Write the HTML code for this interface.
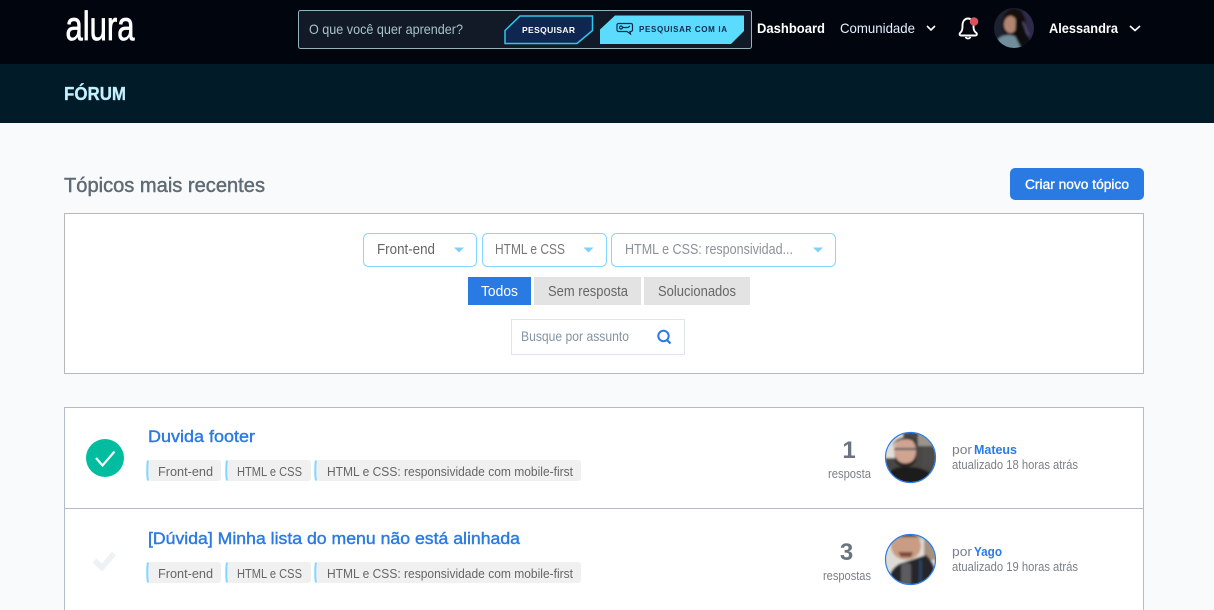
<!DOCTYPE html>
<html lang="pt-BR">
<head>
<meta charset="utf-8">
<title>Fórum</title>
<style>
html,body{margin:0;padding:0;width:1214px;height:610px;overflow:hidden;background:#f9fafc}
svg{display:block;position:absolute;left:0;top:0}
text{font-family:"Liberation Sans",sans-serif;}
.tag{font-size:12.800px;fill:#666}
.b{font-weight:bold}
.sel{font-size:14.500px}
.tab{font-size:14.500px;fill:#666}
.sm{font-size:12.500px;fill:#7a8088}
</style>
</head>
<body>
<svg width="1214" height="610" viewBox="0 0 1214 610" xmlns="http://www.w3.org/2000/svg">
<defs>
<clipPath id="c0"><circle cx="1014" cy="28" r="20"/></clipPath>
<clipPath id="c1"><circle cx="910.500" cy="457.500" r="24.500"/></clipPath>
<clipPath id="c2"><circle cx="910.500" cy="559.500" r="24.500"/></clipPath>
<filter id="bl" x="-10%" y="-10%" width="120%" height="120%"><feGaussianBlur stdDeviation="1.100"/></filter>
</defs>

<!-- header -->
<rect x="0" y="0" width="1214" height="64" fill="#01050e"/>
<rect x="0" y="64" width="1214" height="59" fill="#021b29"/>
<text x="65.500" y="40" font-size="41" fill="#fff" stroke="#fff" stroke-width="0.700" textLength="69" lengthAdjust="spacingAndGlyphs">alura</text>
<text x="64" y="100" font-size="18.500" class="b" fill="#c4f1ff" stroke="#c4f1ff" stroke-width="0.300" textLength="62" lengthAdjust="spacingAndGlyphs">FÓRUM</text>

<!-- search -->
<rect x="298.500" y="10.500" width="453" height="38" rx="2" fill="#111a26" stroke="#94b4bb"/>
<text x="309" y="34" font-size="14" fill="#a9c3ca" textLength="154" lengthAdjust="spacingAndGlyphs">O que você quer aprender?</text>
<path d="M505 30.500 L520 16 H592.500 V30.500 L577 43.500 H505 Z" fill="#0f2750" stroke="#2fc6ec" stroke-width="1.500"/>
<text x="522" y="33" font-size="8.500" class="b" fill="#fff" textLength="53" lengthAdjust="spacing">PESQUISAR</text>
<path d="M600 29.500 L615 15.500 H744 V31 L731 44 H600 Z" fill="#5bdcff"/>
<g fill="none" stroke="#0d2a4c" stroke-width="1.200">
<path d="M618.500 23.500 H631 a1.500 1.500 0 0 1 1.500 1.500 V30 a1.500 1.500 0 0 1 -1.500 1.500 H630 L630.500 34 L627 31.500 H618.500 a1.500 1.500 0 0 1 -1.500 -1.500 V25 a1.500 1.500 0 0 1 1.500 -1.500 Z"/>
<circle cx="621" cy="27.500" r="1.500"/><path d="M622.500 27.500 H628 L630 26"/>
</g>
<text x="639" y="32" font-size="8" class="b" fill="#0d2a4c" textLength="88" lengthAdjust="spacing">PESQUISAR COM IA</text>

<!-- nav -->
<text x="757" y="33" font-size="13.500" class="b" fill="#fff" textLength="68" lengthAdjust="spacingAndGlyphs">Dashboard</text>
<text x="840" y="33" font-size="14" fill="#e4f1ff" textLength="75" lengthAdjust="spacingAndGlyphs">Comunidade</text>
<path d="M927 26 L931 30 L935 26" fill="none" stroke="#fff" stroke-width="1.600"/>
<path d="M960 33 C962.500 31 962.500 28.500 962.500 25.500 C962.500 21 965 18.500 968 18.500 C971 18.500 973.500 21 973.500 25.500 C973.500 28.500 973.500 31 976.500 33 C977.500 34.500 976.500 35.500 975.500 35.500 H961 C960 35.500 959 34.500 960 33 Z" fill="none" stroke="#fff" stroke-width="1.900"/>
<path d="M965.500 37 C966.500 39 969.500 39 970.500 37" fill="none" stroke="#fff" stroke-width="1.700"/>
<circle cx="974" cy="21.500" r="4.300" fill="#d9535c"/>
<g clip-path="url(#c0)"><g filter="url(#bl)">
<rect x="992" y="6" width="44" height="44" fill="#1c2030"/>
<rect x="1023" y="6" width="13" height="44" fill="#2d2c4c"/>
<ellipse cx="1014" cy="24" rx="12" ry="15" fill="#17100f"/>
<ellipse cx="1010.500" cy="24.500" rx="6.500" ry="8.500" fill="#b08672"/>
<path d="M994 50 C995 39 1001 35 1009 35 C1016 35 1021 40 1023 50 Z" fill="#6f8d9a"/>
<path d="M1016 16 C1025 20 1023 32 1029 38 C1033 44 1029 50 1022 50 L1015 36 Z" fill="#110d10"/>
<path d="M1023 22 C1026 28 1026 32 1029 35" stroke="#5a5070" stroke-width="1.500" fill="none"/>
</g></g>
<text x="1049" y="33" font-size="13.500" class="b" fill="#fff" textLength="69" lengthAdjust="spacingAndGlyphs">Alessandra</text>
<path d="M1130 26 L1135 30.500 L1140 26" fill="none" stroke="#fff" stroke-width="1.600"/>

<!-- title -->
<text x="64" y="192" font-size="20.500" fill="#5f6b75" stroke="#5f6b75" stroke-width="0.450" textLength="201" lengthAdjust="spacingAndGlyphs">Tópicos mais recentes</text>
<rect x="1010" y="168" width="134" height="32" rx="5" fill="#2a7ae4"/>
<text x="1025" y="189" font-size="13.500" fill="#fff" stroke="#fff" stroke-width="0.350" textLength="104" lengthAdjust="spacingAndGlyphs">Criar novo tópico</text>

<!-- filters -->
<rect x="64.500" y="213.500" width="1079" height="160" fill="#fff" stroke="#b9b9b9"/>
<rect x="363.500" y="233.500" width="113" height="33" rx="5" fill="#fff" stroke="#81d8ff"/>
<rect x="482.500" y="233.500" width="124" height="33" rx="5" fill="#fff" stroke="#81d8ff"/>
<rect x="611.500" y="233.500" width="224" height="33" rx="5" fill="#fff" stroke="#81d8ff"/>
<text x="377" y="254" class="sel" fill="#666" textLength="58" lengthAdjust="spacingAndGlyphs">Front-end</text>
<text x="495" y="254" class="sel" fill="#777" textLength="70" lengthAdjust="spacingAndGlyphs">HTML e CSS</text>
<text x="625" y="254" class="sel" fill="#8b9299" textLength="168" lengthAdjust="spacingAndGlyphs">HTML e CSS: responsividad...</text>
<path d="M454 247.500 H464 L459 252.500 Z M583.500 247.500 H593.500 L588.500 252.500 Z M813 247.500 H823 L818 252.500 Z" fill="#81d0f5"/>
<rect x="468" y="277" width="63" height="28" fill="#2a7ae4"/>
<rect x="534" y="277" width="107" height="28" fill="#e3e3e3"/>
<rect x="644" y="277" width="106" height="28" fill="#e3e3e3"/>
<text x="481" y="296" class="tab" style="fill:#fff" textLength="37" lengthAdjust="spacingAndGlyphs">Todos</text>
<text x="548" y="296" class="tab" textLength="80" lengthAdjust="spacingAndGlyphs">Sem resposta</text>
<text x="658" y="296" class="tab" textLength="78" lengthAdjust="spacingAndGlyphs">Solucionados</text>
<rect x="511.500" y="319.500" width="173" height="35" fill="#fff" stroke="#dde6ee"/>
<text x="521" y="341" font-size="14" fill="#8494a3" textLength="108" lengthAdjust="spacingAndGlyphs">Busque por assunto</text>
<circle cx="663.500" cy="336" r="5.200" fill="none" stroke="#2a7ae4" stroke-width="2"/>
<path d="M667 340 L670.500 343.500" stroke="#2a7ae4" stroke-width="2.200" fill="none"/>

<!-- list -->
<rect x="64.500" y="407.500" width="1079" height="220" fill="#fff" stroke="#b5bcc9"/>
<path d="M64 508.500 H1144" stroke="#b5bcc9"/>

<circle cx="105" cy="458" r="19" fill="#00bd9f"/>
<path d="M96 458 L102.500 465.500 L114.500 451.500" fill="none" stroke="#fff" stroke-width="2.200"/>
<path d="M94.500 560.500 L102 567.500 L114 553.500" fill="none" stroke="#edf2f6" stroke-width="5.500"/>

<text x="148" y="442" font-size="17" fill="#2a7ae4" stroke="#2a7ae4" stroke-width="0.400" textLength="107" lengthAdjust="spacingAndGlyphs">Duvida footer</text>
<text x="148" y="544" font-size="17" fill="#2a7ae4" stroke="#2a7ae4" stroke-width="0.400" textLength="372" lengthAdjust="spacingAndGlyphs">[Dúvida] Minha lista do menu não está alinhada</text>

<g id="t1">
<rect x="147" y="460" width="74" height="21" rx="3" fill="#f0f0f0"/>
<rect x="226" y="460" width="85" height="21" rx="3" fill="#f0f0f0"/>
<rect x="315" y="460" width="266" height="21" rx="3" fill="#f0f0f0"/>
<path d="M148 460.500 C147 464 147 477 148 480.500 M227 460.500 C226 464 226 477 227 480.500 M316 460.500 C315 464 315 477 316 480.500" fill="none" stroke="#81d8ff" stroke-width="2"/>
<text x="158" y="476" class="tag" textLength="55" lengthAdjust="spacingAndGlyphs">Front-end</text>
<text x="237" y="476" class="tag" textLength="65" lengthAdjust="spacingAndGlyphs">HTML e CSS</text>
<text x="327" y="476" class="tag" textLength="246" lengthAdjust="spacingAndGlyphs">HTML e CSS: responsividade com mobile-first</text>
</g>
<g id="t2">
<rect x="147" y="562" width="74" height="21" rx="3" fill="#f0f0f0"/>
<rect x="226" y="562" width="85" height="21" rx="3" fill="#f0f0f0"/>
<rect x="315" y="562" width="266" height="21" rx="3" fill="#f0f0f0"/>
<path d="M148 562.500 C147 566 147 579 148 582.500 M227 562.500 C226 566 226 579 227 582.500 M316 562.500 C315 566 315 579 316 582.500" fill="none" stroke="#81d8ff" stroke-width="2"/>
<text x="158" y="578" class="tag" textLength="55" lengthAdjust="spacingAndGlyphs">Front-end</text>
<text x="237" y="578" class="tag" textLength="65" lengthAdjust="spacingAndGlyphs">HTML e CSS</text>
<text x="327" y="578" class="tag" textLength="246" lengthAdjust="spacingAndGlyphs">HTML e CSS: responsividade com mobile-first</text>
</g>

<!-- counts -->
<text x="849" y="458" font-size="24" class="b" fill="#6c757d" text-anchor="middle">1</text>
<text x="828" y="478" class="sm" textLength="43" lengthAdjust="spacingAndGlyphs">resposta</text>
<text x="846.500" y="560" font-size="24" class="b" fill="#6c757d" text-anchor="middle">3</text>
<text x="823" y="580" class="sm" textLength="48" lengthAdjust="spacingAndGlyphs">respostas</text>

<!-- avatar 1 -->
<g clip-path="url(#c1)"><g filter="url(#bl)">
<rect x="883" y="430" width="55" height="55" fill="#4a4745"/>
<rect x="883" y="430" width="20" height="28" fill="#e2ded6"/>
<rect x="918" y="432" width="20" height="14" fill="#9a948a"/>
<rect x="922" y="446" width="16" height="22" fill="#4e4c4a"/>
<ellipse cx="905" cy="451" rx="11" ry="14" fill="#cfa592"/>
<path d="M893 447 C892 435 918 433 918 447 L916 442 C910 438 898 438 894 444 Z" fill="#26201e"/>
<path d="M895 454 C896 466 914 467 916 454 L916 461 C912 469 898 469 895 461 Z" fill="#2a211e"/>
<path d="M883 485 C886 471 895 466 905 467 C918 466 934 470 938 485 Z" fill="#1e1e1e"/>
<path d="M894 449 H916" stroke="#4f5356" stroke-width="2"/>
</g></g>
<circle cx="910.500" cy="457.500" r="25" fill="none" stroke="#2a7ae4" stroke-width="1.200"/>

<!-- avatar 2 -->
<g clip-path="url(#c2)"><g filter="url(#bl)">
<rect x="883" y="532" width="55" height="55" fill="#dedbd5"/>
<rect x="924" y="532" width="14" height="28" fill="#a88f7e"/>
<ellipse cx="906" cy="546" rx="15" ry="14" fill="#c99c84"/>
<path d="M892 540 C896 531 918 531 922 540 L918 537 H896 Z" fill="#55443a"/>
<path d="M898 552 H913 L911 557 H901 Z" fill="#7a4c3c"/>
<path d="M887 587 C888 572 895 564 905 562 L926 555 C933 561 938 572 938 587 Z" fill="#26272a"/>
<rect x="901" y="563" width="10" height="24" rx="3" fill="#5c5c5e"/>
<rect x="919" y="560" width="3" height="27" fill="#2b4263"/>
</g></g>
<circle cx="910.500" cy="559.500" r="25" fill="none" stroke="#2a7ae4" stroke-width="1.200"/>

<!-- authors -->
<text x="952" y="454" class="sm" textLength="20" lengthAdjust="spacingAndGlyphs">por</text>
<text x="974" y="454" font-size="13" class="b" fill="#2a7ae4" textLength="43" lengthAdjust="spacingAndGlyphs">Mateus</text>
<text x="952" y="469" class="sm" textLength="126" lengthAdjust="spacingAndGlyphs">atualizado 18 horas atrás</text>
<text x="952" y="556" class="sm" textLength="20" lengthAdjust="spacingAndGlyphs">por</text>
<text x="974" y="556" font-size="13" class="b" fill="#2a7ae4" textLength="28" lengthAdjust="spacingAndGlyphs">Yago</text>
<text x="952" y="571" class="sm" textLength="126" lengthAdjust="spacingAndGlyphs">atualizado 19 horas atrás</text>
</svg>
</body>
</html>
